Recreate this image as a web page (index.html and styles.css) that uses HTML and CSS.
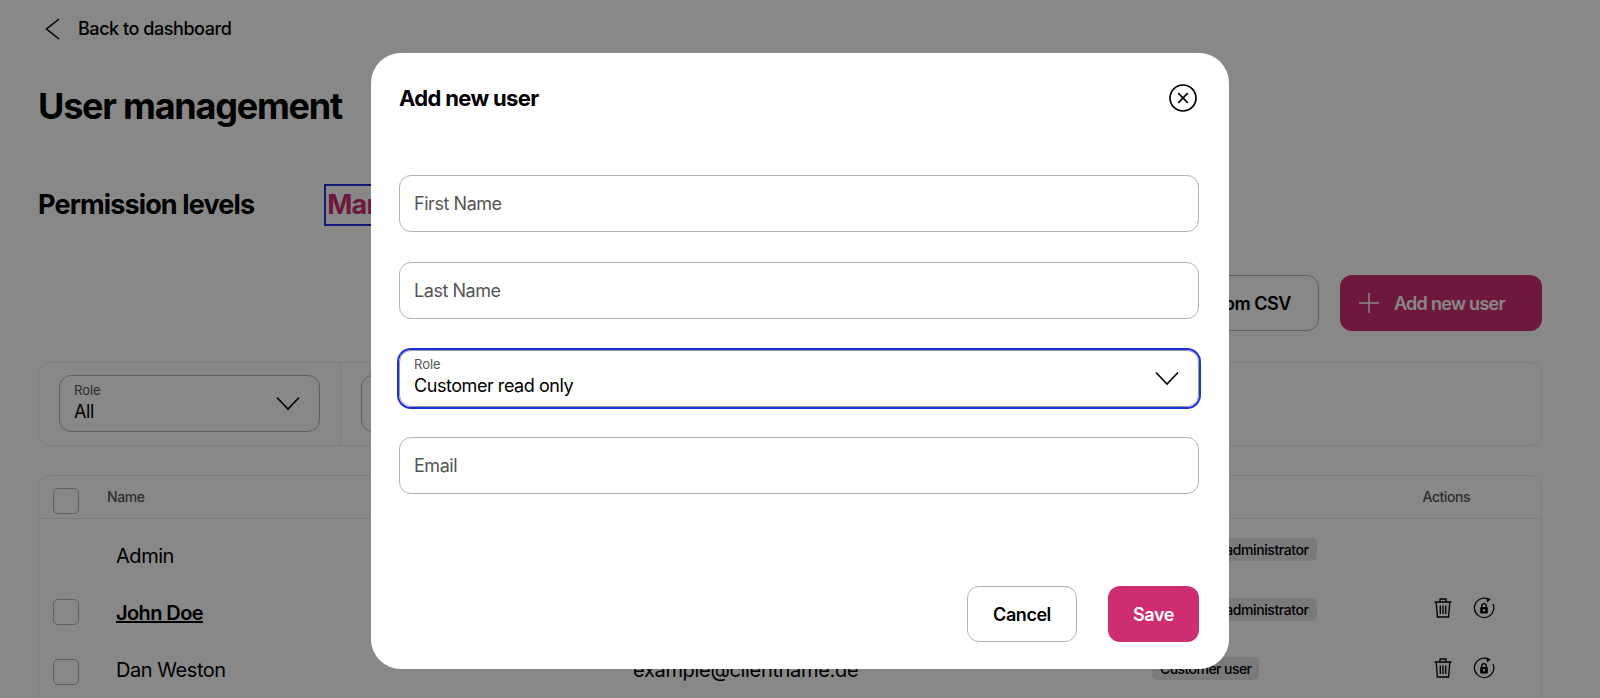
FILE: index.html
```html
<!DOCTYPE html>
<html lang="en">
<head>
<meta charset="utf-8">
<title>User management</title>
<link rel="stylesheet" href="styles.css">
</head>
<body>
<main class="page">
  <a class="back">
    <svg class="back-icon" viewBox="0 0 16 24" width="16" height="24"><path d="M14 3 1.500 13 14 23" fill="none" stroke="#000" stroke-width="1.600"/></svg>
    <span>Back to dashboard</span>
  </a>
  <h1 class="title">User management</h1>
  <div class="tabs">
    <h2 class="tab-heading">Permission levels</h2>
    <span class="tab-active">Manage users</span>
  </div>
  <div class="toolbar">
    <button class="btn btn-outline">Import from CSV</button>
    <button class="btn btn-primary">
      <svg viewBox="0 0 22 22" width="22" height="22"><path d="M11 1v20M1 11h20" fill="none" stroke="currentColor" stroke-width="1.500"/></svg>
      <span>Add new user</span>
    </button>
  </div>
  <section class="filters">
    <div class="filter-cell">
      <div class="select">
        <div class="select-text"><span class="select-label">Role</span><span class="select-value">All</span></div>
        <svg class="chev" viewBox="0 0 24 15" width="24" height="15"><path d="M1 1.500 12 13 23 1.500" fill="none" stroke="#000" stroke-width="1.600"/></svg>
      </div>
    </div>
    <div class="filter-cell filter-second">
      <div class="select">
        <div class="select-text"><span class="select-label">Status</span><span class="select-value">All</span></div>
      </div>
    </div>
  </section>
  <section class="table">
    <div class="thead">
      <span class="box box-head"></span>
      <span class="th-name">Name</span>
      <span class="th-actions">Actions</span>
    </div>
    <div class="tbody">
      <div class="col col-check">
        <span class="box"></span>
        <span class="box"></span>
      </div>
      <div class="col col-name">
        <span class="name">Admin</span>
        <span class="name name-link">John Doe</span>
        <span class="name">Dan Weston</span>
      </div>
      <div class="col col-email">
        <span class="name">example@clientname.de</span>
        <span class="name">example@clientname.de</span>
        <span class="name">example@clientname.de</span>
      </div>
      <div class="col col-role">
        <div class="role-row"><span class="badge badge-wide">Customer administrator</span></div>
        <div class="role-row"><span class="badge badge-wide">Customer administrator</span></div>
        <div class="role-row"><span class="badge">Customer user</span></div>
      </div>
      <div class="col col-actions">
        <div class="act-row act-row-first"></div>
        <div class="act-row">
          <svg viewBox="0 0 18 20" width="18" height="20"><path d="M.5 4h17M6 4V1h6v3M2.200 4l1.200 15h11.200l1.200-15M6.300 7.500v8.500M9 7.500v8.500M11.700 7.500v8.500" fill="none" stroke="#000" stroke-width="1.300"/></svg>
          <svg viewBox="0 0 22 22" width="22" height="22"><path d="M14.500 1.800A9.700 9.700 0 1 0 20 7" fill="none" stroke="#000" stroke-width="1.200"/><path d="m13.500 .2 4.300 2.300-3.700 2.700z" fill="#000"/><path d="M8.800 10.500V8.800a2.200 2.200 0 0 1 4.400 0v1.700" fill="none" stroke="#000" stroke-width="1.300"/><path fill-rule="evenodd" d="M8 10h6a.8.8 0 0 1 .8.800v5a.8.8 0 0 1-.8.800H8a.8.8 0 0 1-.8-.800v-5A.8.8 0 0 1 8 10zm3 2a1.200 1.200 0 1 0 0 2.400 1.200 1.200 0 0 0 0-2.400z" fill="#000"/></svg>
        </div>
        <div class="act-row">
          <svg viewBox="0 0 18 20" width="18" height="20"><path d="M.5 4h17M6 4V1h6v3M2.200 4l1.200 15h11.200l1.200-15M6.300 7.500v8.500M9 7.500v8.500M11.700 7.500v8.500" fill="none" stroke="#000" stroke-width="1.300"/></svg>
          <svg viewBox="0 0 22 22" width="22" height="22"><path d="M14.500 1.800A9.700 9.700 0 1 0 20 7" fill="none" stroke="#000" stroke-width="1.200"/><path d="m13.500 .2 4.300 2.300-3.700 2.700z" fill="#000"/><path d="M8.800 10.500V8.800a2.200 2.200 0 0 1 4.400 0v1.700" fill="none" stroke="#000" stroke-width="1.300"/><path fill-rule="evenodd" d="M8 10h6a.8.8 0 0 1 .8.800v5a.8.8 0 0 1-.8.800H8a.8.8 0 0 1-.8-.800v-5A.8.8 0 0 1 8 10zm3 2a1.200 1.200 0 1 0 0 2.400 1.200 1.200 0 0 0 0-2.400z" fill="#000"/></svg>
        </div>
      </div>
    </div>
  </section>
</main>
<div class="overlay">
  <div class="modal">
    <header class="modal-head">
      <h2 class="modal-title">Add new user</h2>
      <svg class="modal-close" viewBox="0 0 28 28" width="28" height="28"><circle cx="14" cy="14" r="13" fill="none" stroke="#000" stroke-width="1.700"/><path d="m9.200 9.200 9.600 9.600m0-9.600-9.600 9.600" fill="none" stroke="#000" stroke-width="1.700"/></svg>
    </header>
    <form class="modal-form">
      <div class="field"><span class="placeholder">First Name</span></div>
      <div class="field"><span class="placeholder">Last Name</span></div>
      <div class="field field-focus">
        <div class="select-text"><span class="select-label">Role</span><span class="select-value">Customer read only</span></div>
        <svg class="chev" viewBox="0 0 24 15" width="24" height="15"><path d="M1 1.500 12 13 23 1.500" fill="none" stroke="#000" stroke-width="1.600"/></svg>
      </div>
      <div class="field"><span class="placeholder">Email</span></div>
    </form>
    <footer class="modal-foot">
      <button class="btn btn-cancel">Cancel</button>
      <button class="btn btn-save">Save</button>
    </footer>
  </div>
</div>
</body>
</html>
```
FILE: styles.css
```css
* { box-sizing: border-box; }
html, body { margin: 0; height: 698px; overflow: hidden; background: #fff; }
body { font-family: Inter, "Liberation Sans", sans-serif; color: #000; position: relative; letter-spacing: -.028em; }
h1, h2 { margin: 0; }

.page { padding: 16px 58px 0 38px; height: 698px; overflow: hidden; }
.back { display: flex; align-items: center; height: 24px; gap: 17px; padding-left: 7px; font-size: 18px; font-weight: 500; }
.title { margin-top: 44px; font-size: 36px; line-height: 44px; font-weight: 700; letter-spacing: -.034em; }
.tabs { display: flex; align-items: center; margin-top: 56px; height: 41px; gap: 70px; }
.tab-heading { font-size: 27px; font-weight: 700; letter-spacing: -.032em; }
.tab-active { outline: 2px solid #1e2fe0; outline-offset: -2px; height: 42px; line-height: 42px; padding: 0 3px; font-size: 27px; font-weight: 700; letter-spacing: -.032em; color: #cf2d72; }

.toolbar { display: flex; justify-content: flex-end; gap: 21px; margin-top: 50px; }
.btn { font: inherit; letter-spacing: inherit; height: 56px; border-radius: 12px; font-size: 18px; font-weight: 600; display: inline-flex; align-items: center; justify-content: center; }
.btn-outline { width: 220px; justify-content: flex-end; padding-right: 27px; background: #fff; border: 1px solid #b3b3b3; color: #000; }
.btn-primary { width: 202px; justify-content: flex-start; padding-left: 18px; gap: 14px; border: 0; background: #cf2d72; color: #fff; letter-spacing: -.04em; }

.filters { display: flex; margin-top: 31px; height: 84px; border: 1px solid #e8e8e8; border-radius: 12px; }
.filter-cell { width: 302px; padding: 12px 20px; border-right: 1px solid #e8e8e8; }
.filter-second { border-right: 0; }
.select { display: flex; align-items: center; justify-content: space-between; height: 57px; padding: 0 19px 0 14px; border: 1px solid #b3b3b3; border-radius: 12px; }
.select-text { display: flex; flex-direction: column; padding-bottom: 2px; }
.select-label { font-size: 13px; line-height: 16px; margin-bottom: 2px; color: #555; letter-spacing: 0; }
.select-value { font-size: 18px; line-height: 24px; }

.table { margin-top: 29px; border: 1px solid #e8e8e8; border-radius: 12px 12px 0 0; height: 260px; }
.thead { display: flex; align-items: center; height: 43px; padding-left: 14px; border-bottom: 1px solid #e8e8e8; font-size: 14px; font-weight: 500; color: #555; }
.box { display: block; width: 26px; height: 26px; border: 1px solid #b3b3b3; border-radius: 5px; }
.box-head { margin-top: 8px; }
.th-name { margin-left: 28px; margin-bottom: 2px; }
.th-actions { margin-left: auto; margin-right: 71px; margin-bottom: 2px; }
.tbody { display: flex; }
.col { display: flex; flex-direction: column; }
.col-check { width: 77px; padding: 80px 0 0 14px; gap: 34px; }
.col-name { width: 517px; padding-top: 23px; }
.col-email { width: 519px; padding-top: 23px; letter-spacing: -.02em; }
.name { display: block; height: 57px; line-height: 28px; font-size: 20px; }
.name-link { font-weight: 600; text-decoration: underline; text-decoration-thickness: 2px; letter-spacing: -.03em; }
.col-role { width: 282px; padding-top: 19px; }
.role-row { height: 59.500px; }
.badge { display: inline-block; height: 23px; line-height: 23px; padding: 0 8px; border-radius: 5px; background: #e5e5e5; font-size: 14px; font-weight: 500; letter-spacing: -.04em; }
.badge-wide { letter-spacing: -.03em; }
.act-row { display: flex; align-items: center; gap: 21px; height: 60px; }
.act-row-first { height: 59px; }

.overlay { position: absolute; inset: 0; background: rgba(0, 0, 0, .467); }
.modal { position: absolute; left: 371px; top: 53px; width: 858px; height: 616px; background: #fff; border-radius: 30px; padding: 27px 30px 27px 28px; display: flex; flex-direction: column; }
.modal-head { display: flex; align-items: center; justify-content: space-between; height: 36px; padding-right: 1px; }
.modal-title { font-size: 22px; font-weight: 700; letter-spacing: -.03em; }
.modal-close { margin-right: 1px; }
.modal-form { display: flex; flex-direction: column; gap: 30.300px; margin-top: 59px; }
.field { display: flex; align-items: center; justify-content: space-between; height: 57px; padding: 0 19px 0 14px; border: 1px solid #b3b3b3; border-radius: 12px; }
.field-focus { border-color: #999; box-shadow: 0 0 0 2px #1e2fe0; }
.placeholder { font-size: 18px; color: #555; }
.modal-foot { display: flex; justify-content: flex-end; gap: 31px; margin-top: auto; }
.btn-cancel { width: 110px; background: #fff; border: 1px solid #b3b3b3; color: #000; }
.btn-save { width: 91px; border: 0; background: #cf2d72; color: #fff; }
```
